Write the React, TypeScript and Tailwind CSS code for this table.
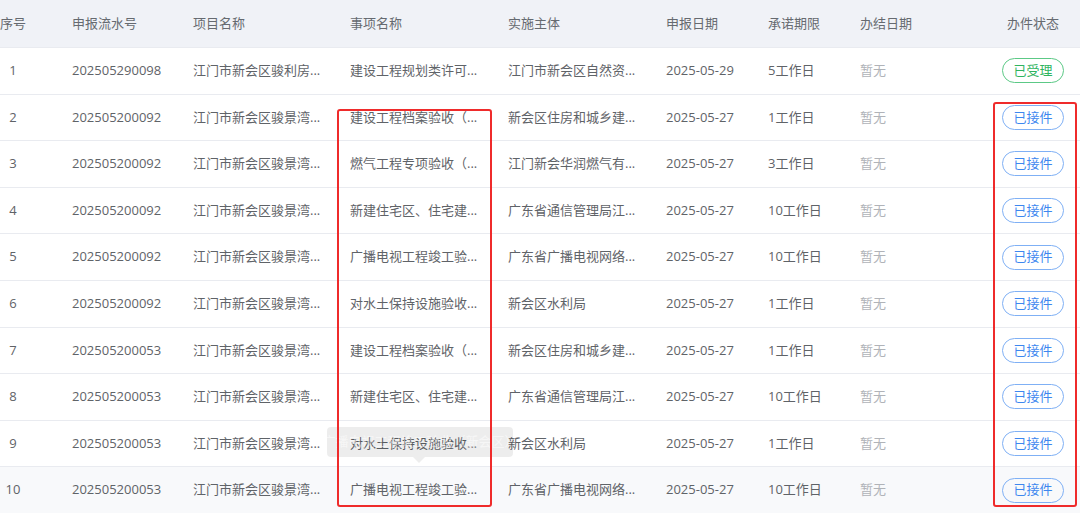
import React from "react";

type Row = {
  no: string;
  serial: string;
  project: string;
  item: string;
  org: string;
  date: string;
  limit: string;
  status: "accepted" | "received";
};

const rows: Row[] = [
  { no: "1", serial: "202505290098", project: "江门市新会区骏利房...", item: "建设工程规划类许可...", org: "江门市新会区自然资...", date: "2025-05-29", limit: "5工作日", status: "accepted" },
  { no: "2", serial: "202505200092", project: "江门市新会区骏景湾...", item: "建设工程档案验收（...", org: "新会区住房和城乡建...", date: "2025-05-27", limit: "1工作日", status: "received" },
  { no: "3", serial: "202505200092", project: "江门市新会区骏景湾...", item: "燃气工程专项验收（...", org: "江门新会华润燃气有...", date: "2025-05-27", limit: "3工作日", status: "received" },
  { no: "4", serial: "202505200092", project: "江门市新会区骏景湾...", item: "新建住宅区、住宅建...", org: "广东省通信管理局江...", date: "2025-05-27", limit: "10工作日", status: "received" },
  { no: "5", serial: "202505200092", project: "江门市新会区骏景湾...", item: "广播电视工程竣工验...", org: "广东省广播电视网络...", date: "2025-05-27", limit: "10工作日", status: "received" },
  { no: "6", serial: "202505200092", project: "江门市新会区骏景湾...", item: "对水土保持设施验收...", org: "新会区水利局", date: "2025-05-27", limit: "1工作日", status: "received" },
  { no: "7", serial: "202505200053", project: "江门市新会区骏景湾...", item: "建设工程档案验收（...", org: "新会区住房和城乡建...", date: "2025-05-27", limit: "1工作日", status: "received" },
  { no: "8", serial: "202505200053", project: "江门市新会区骏景湾...", item: "新建住宅区、住宅建...", org: "广东省通信管理局江...", date: "2025-05-27", limit: "10工作日", status: "received" },
  { no: "9", serial: "202505200053", project: "江门市新会区骏景湾...", item: "对水土保持设施验收...", org: "新会区水利局", date: "2025-05-27", limit: "1工作日", status: "received" },
  { no: "10", serial: "202505200053", project: "江门市新会区骏景湾...", item: "广播电视工程竣工验...", org: "广东省广播电视网络...", date: "2025-05-27", limit: "10工作日", status: "received" },
];

const grid =
  "grid grid-cols-[72px_121px_157px_158px_158px_102px_92px_126px_94px] items-center";

function Badge({ status }: { status: Row["status"] }) {
  if (status === "accepted") {
    return (
      <span className="inline-flex h-[25px] w-[62px] items-center justify-center rounded-full border border-[#5cc986] text-[13px] text-[#2fb45f]">
        已受理
      </span>
    );
  }
  return (
    <span className="inline-flex h-[25px] w-[62px] items-center justify-center rounded-full border border-[#7fb0f5] text-[13px] text-[#3d87ef]">
      已接件
    </span>
  );
}

export default function App() {
  return (
    <div
      className="relative h-[513px] w-[1080px] overflow-hidden bg-white text-[13px] text-[#5f6368]"
      style={{ fontFamily: '"Open Sans", "Noto Sans CJK SC", sans-serif' }}
    >
      <div className={`${grid} h-[47px] bg-[#f0f2f7] text-[13px] text-[#666a70]`}>
        <div className="flex w-[26px] justify-center whitespace-nowrap">序号</div>
        <div>申报流水号</div>
        <div>项目名称</div>
        <div>事项名称</div>
        <div>实施主体</div>
        <div>申报日期</div>
        <div>承诺期限</div>
        <div>办结日期</div>
        <div className="flex w-[94px] justify-center">办件状态</div>
      </div>
      {rows.map((r, i) => (
        <div
          key={i}
          className={`${grid} h-[46.6px] border-t border-[#e9ebf0] ${i === 9 ? "bg-[#f8f9fb]" : "bg-white"}`}
        >
          <div className="flex w-[26px] justify-center">{r.no}</div>
          <div>{r.serial}</div>
          <div className="whitespace-nowrap">{r.project}</div>
          <div className="whitespace-nowrap">{r.item}</div>
          <div className="whitespace-nowrap">{r.org}</div>
          <div>{r.date}</div>
          <div>{r.limit}</div>
          <div className="text-[#b0b3b8]">暂无</div>
          <div className="flex w-[94px] justify-center">
            <Badge status={r.status} />
          </div>
        </div>
      ))}

      {/* faint tooltip */}
      <div className="absolute left-[327px] top-[427px] flex h-[30px] w-[186px] items-center justify-center rounded-[4px] bg-[rgba(0,0,0,0.07)] text-[13px] text-[rgba(255,255,255,0.55)] whitespace-nowrap">
        广播电视工程竣工验收（新会区）
        <span className="absolute left-[86px] top-[30px] h-0 w-0 border-x-[6px] border-t-[6px] border-x-transparent border-t-[rgba(0,0,0,0.07)]" />
      </div>

      {/* red annotation boxes */}
      <div className="pointer-events-none absolute left-[337px] top-[109px] h-[398px] w-[155px] rounded-[3px] border-2 border-[#ef2b2b]" />
      <div className="pointer-events-none absolute left-[993px] top-[102px] h-[405px] w-[84px] rounded-[3px] border-2 border-[#ef2b2b]" />
    </div>
  );
}
